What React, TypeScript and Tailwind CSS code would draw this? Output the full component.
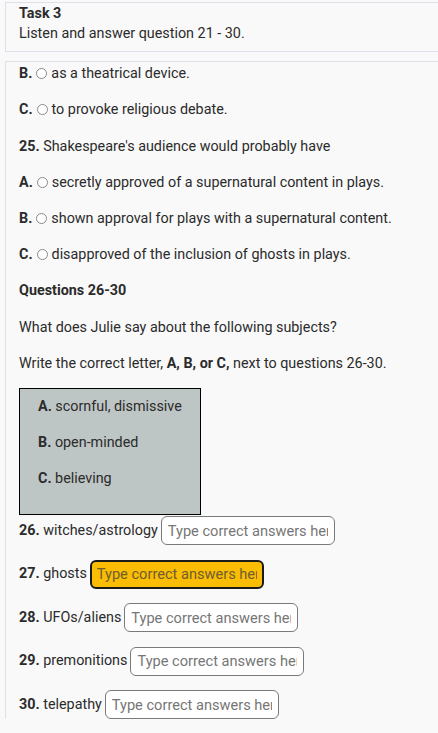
const choices25 = [
  { k: 'A.', t: 'secretly approved of a supernatural content in plays.' },
  { k: 'B.', t: 'shown approval for plays with a supernatural content.' },
  { k: 'C.', t: 'disapproved of the inclusion of ghosts in plays.' },
]

const answers = [
  { n: '26.', label: 'witches/astrology', active: false },
  { n: '27.', label: 'ghosts', active: true },
  { n: '28.', label: 'UFOs/aliens', active: false },
  { n: '29.', label: 'premonitions', active: false },
  { n: '30.', label: 'telepathy', active: false },
]

function Radio() {
  return (
    <span className="inline-block w-[11px] h-[11px] rounded-full border border-[#8a8a8a] bg-white align-[-1px] ml-[4px] mr-[4px]" />
  )
}

function Choice({ k, t }: { k: string; t: string }) {
  return (
    <p className="mb-[16.1px]">
      <b className="font-bold">{k}</b>
      <Radio />
      {t}
    </p>
  )
}

export default function App() {
  return (
    <div
      className="w-[438px] h-[733px] overflow-hidden bg-[#f9f9f9] text-[14.35px] leading-[20.1px] text-[#2b2b2b]"
      style={{ fontFamily: 'Roboto, "Liberation Sans", sans-serif' }}
    >
      {/* Task header */}
      <div className="ml-[5px] mt-[2px] w-[460px] border border-[#dde0e8] bg-[#f9f9f9] pl-[13px] pt-px pb-[7px]">
        <div className="font-bold">Task 3</div>
        <div>Listen and answer question 21 - 30.</div>
      </div>

      {/* Questions */}
      <div className="ml-[5px] mt-[9px] w-[460px] border-l border-t border-[#dde0e8] pl-[13px] pt-[2px]">
        <Choice k="B." t="as a theatrical device." />
        <Choice k="C." t="to provoke religious debate." />
        <p className="mb-[16.1px] mt-px">
          <b>25.</b> Shakespeare's audience would probably have
        </p>
        {choices25.map((c) => (
          <Choice key={c.k} k={c.k} t={c.t} />
        ))}
        <p className="mb-[16.1px] mt-px font-bold">Questions 26-30</p>
        <p className="mb-[16.1px]">What does Julie say about the following subjects?</p>
        <p className="mb-[14px]">
          Write the correct letter, <b>A, B, or C,</b> next to questions 26-30.
        </p>

        <div className="w-[182px] border border-black bg-[#bec5c5] pl-[18px] pt-[8px] pb-[9px]">
          <p className="mb-[16px]">
            <b>A.</b> scornful, dismissive
          </p>
          <p className="mb-[16px]">
            <b>B.</b> open-minded
          </p>
          <p className="mb-[16px]">
            <b>C.</b> believing
          </p>
        </div>

        <div className="mt-px">
          {answers.map((a) => (
            <div key={a.n} className="flex items-center h-[29px] mb-[14.5px]">
              <span className="whitespace-nowrap">
                <b>{a.n}</b> {a.label}
              </span>
              <input
                placeholder="Type correct answers here"
                className={
                  a.active
                    ? 'ml-[3px] w-[174px] h-[29px] rounded-[6px] border-2 border-[#1a1a1a] bg-[#fbbc04] px-[5px] text-[14.6px] text-[#333] placeholder:text-[#6e5e30] outline-none'
                    : 'ml-[3px] w-[174px] h-[29px] rounded-[6px] border border-[#7a7a7a] bg-white px-[6px] text-[14.6px] text-[#333] placeholder:text-[#767676] outline-none'
                }
                style={{ fontFamily: 'Roboto, "Liberation Sans", sans-serif' }}
              />
            </div>
          ))}
        </div>
      </div>
    </div>
  )
}
